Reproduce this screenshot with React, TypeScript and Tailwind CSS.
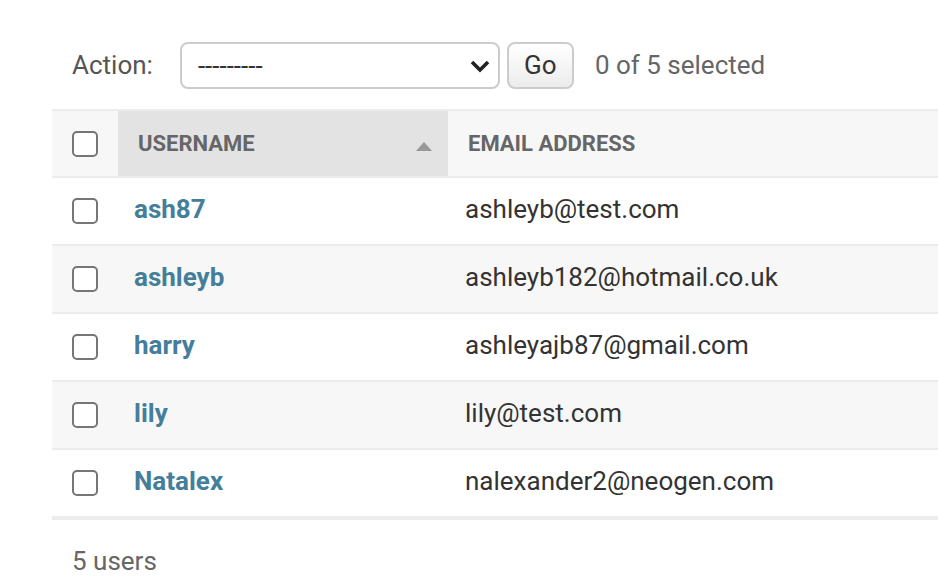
import React from "react";

const rows = [
  { u: "ash87", e: "ashleyb@test.com" },
  { u: "ashleyb", e: "ashleyb182@hotmail.co.uk" },
  { u: "harry", e: "ashleyajb87@gmail.com" },
  { u: "lily", e: "lily@test.com" },
  { u: "Natalex", e: "nalexander2@neogen.com" },
];

function Box() {
  return (
    <div className="w-[26px] h-[26px] rounded-[5px] border-2 border-[#767676] bg-white" />
  );
}

export default function App() {
  return (
    <div
      className="w-[938px] h-[586px] bg-white overflow-hidden"
      style={{ fontFamily: "Roboto, 'Liberation Sans', sans-serif" }}
    >
      <div className="pt-[42px] pl-[72px] flex items-center h-[89px]">
        <span className="text-[26px] text-[#555] mr-[27px]">Action:</span>
        <div className="w-[320px] h-[47px] border-2 border-[#ccc] rounded-[8px] flex items-center pl-[16px] pr-[7px] justify-between">
          <span className="text-[26px] text-[#333] leading-none">---------</span>
          <svg width="22" height="14" viewBox="0 0 22 14">
            <polyline points="3,3 11,11 19,3" fill="none" stroke="#222" strokeWidth="3.6" />
          </svg>
        </div>
        <div className="ml-[7px] w-[67px] h-[47px] border-2 border-[#ccc] rounded-[8px] flex items-center justify-center bg-gradient-to-b from-white to-[#ececec] text-[26px] text-[#333]">
          Go
        </div>
        <span className="ml-[21px] text-[26px] text-[#666]">0 of 5 selected</span>
      </div>

      <div className="ml-[52px] mt-[20px]">
        <div className="border-t-2 border-b-2 border-[#ececec] bg-[#f7f7f7] flex h-[69px]">
          <div className="w-[66px] flex items-center pl-[20px]">
            <Box />
          </div>
          <div className="w-[330px] bg-[#e3e3e3] flex items-center pl-[20px] pr-[16px] justify-between">
            <span className="text-[22px] font-bold text-[#666] uppercase">Username</span>
            <svg width="16" height="9" viewBox="0 0 16 9" className="mt-[6px]">
              <polygon points="0,9 8,0 16,9" fill="#999" />
            </svg>
          </div>
          <div className="flex-1 flex items-center pl-[20px]">
            <span className="text-[22px] font-bold text-[#666] uppercase">Email address</span>
          </div>
        </div>
        {rows.map((r, i) => (
          <div
            key={r.u}
            className={`flex h-[68px] border-b-2 border-[#ececec] ${i % 2 === 1 ? "bg-[#f7f7f7]" : "bg-white"}`}
          >
            <div className="w-[66px] flex items-center pl-[20px]">
              <Box />
            </div>
            <div className="w-[330px] flex items-center pl-[16px] pb-[3px]">
              <span className="text-[26px] font-bold text-[#447e9b]">{r.u}</span>
            </div>
            <div className="flex-1 flex items-center pl-[17px] pb-[3px]">
              <span className="text-[26px] text-[#333]">{r.e}</span>
            </div>
          </div>
        ))}
        <div className="h-[2px] bg-[#ececec]" />
        <div className="pt-[22px] pl-[20px] text-[26px] text-[#666]">5 users</div>
      </div>
    </div>
  );
}
